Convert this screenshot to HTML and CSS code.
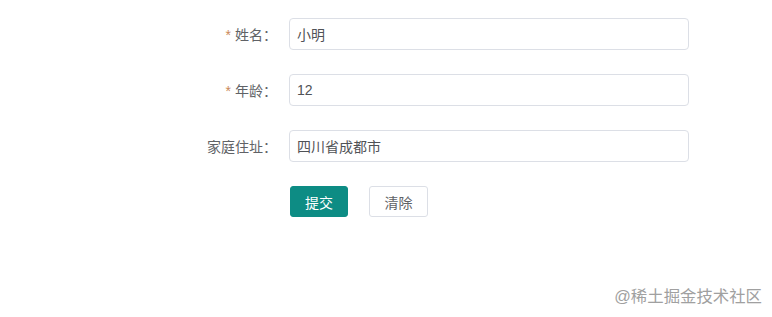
FILE: index.html
```html
<!DOCTYPE html>
<html lang="zh">
  <head>
    <meta charset="utf-8" />
    <title>表单</title>
    <link rel="stylesheet" href="styles.css">
  </head>
  <body>
    <main>
      <form class="form" autocomplete="off">
        <div class="form-item">
          <label class="form-label is-required">姓名：</label>
          <input class="form-input" type="text" value="小明" />
        </div>
        <div class="form-item">
          <label class="form-label is-required">年龄：</label>
          <input class="form-input" type="text" value="12" />
        </div>
        <div class="form-item">
          <label class="form-label">家庭住址：</label>
          <input class="form-input" type="text" value="四川省成都市" />
        </div>
        <div class="form-item form-actions">
          <button type="button" class="btn btn-primary">提交</button>
          <button type="button" class="btn">清除</button>
        </div>
      </form>
    </main>
    <div class="watermark">@稀土掘金技术社区</div>
  </body>
</html>
```

FILE: styles.css
```css
html {
  height: 100%;
  font-family: "Liberation Sans", "Noto Sans CJK SC", sans-serif;
}

body {
  margin: 0;
  height: 100%;
  background-color: #fff;
  color: #606266;
}

*,
:after,
:before {
  box-sizing: border-box;
}

main {
  padding-top: 18px;
}

.form {
  margin-left: 189px;
  width: 500px;
}

.form-item {
  display: flex;
  align-items: center;
  margin-bottom: 24px;
}

.form-label {
  width: 100px;
  padding-right: 12px;
  text-align: right;
  font-size: 14px;
  color: #606266;
}

.form-label.is-required:before {
  content: "*";
  margin-right: 4px;
  color: #c9895a;
}

.form-input {
  width: 400px;
  height: 32px;
  padding: 0 7px;
  border: 1px solid #dcdfe6;
  border-radius: 4px;
  font-family: inherit;
  font-size: 14px;
  color: #505256;
  outline: none;
}

.form-actions {
  padding-left: 101px;
  align-items: flex-start;
}

.btn {
  width: 59px;
  height: 31px;
  margin-right: 21px;
  border: 1px solid #dcdfe6;
  border-radius: 3px;
  background-color: #fff;
  font-family: inherit;
  font-size: 14px;
  color: #606266;
}

.btn-primary {
  width: 58px;
  border-color: #0d8c84;
  background-color: #0d8c84;
  color: #fff;
}

.watermark {
  position: absolute;
  right: 10px;
  bottom: 10px;
  font-size: 16.4px;
  color: #a0a0a0;
}
```
